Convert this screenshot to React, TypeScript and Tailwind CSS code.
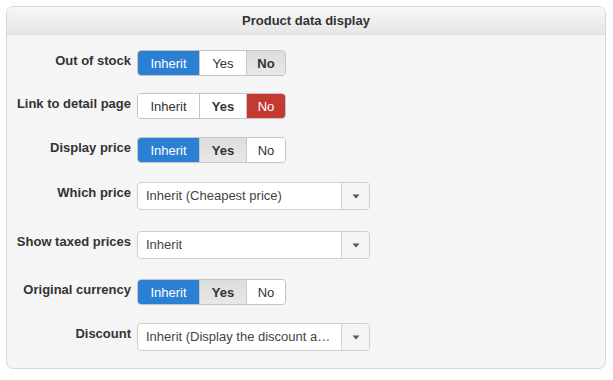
import React from "react";

type Seg = { label: string; style: "blue" | "gray" | "red" | "plain" | "bold" };

function Segmented({ items }: { items: Seg[] }) {
  return (
    <div className="flex h-[26px] rounded-[4px] border border-[#c4c4c4] overflow-hidden">
      {items.map((it, i) => {
        const base = "flex items-center justify-center h-full text-[13px] leading-none";
        const widths = ["w-[61px]", "w-[47px]", "w-[39px]"];
        let cls = "bg-white text-[#333]";
        if (it.style === "blue") cls = "bg-[#2b80d4] text-white";
        if (it.style === "red") cls = "bg-[#c23a31] text-white";
        if (it.style === "gray") cls = "bg-gradient-to-b from-[#dcdcdc] to-[#e8e8e8] text-[#333] font-bold";
        if (it.style === "bold") cls = "bg-white text-[#333] font-bold";
        const border = i > 0 ? "border-l border-[#c8c8c8]" : "";
        return (
          <div key={i} className={`${base} ${widths[i]} ${cls} ${border}`}>
            {it.label}
          </div>
        );
      })}
    </div>
  );
}

function Select({ value }: { value: string }) {
  return (
    <div className="flex h-[28px] w-[233px] rounded-[4px] border border-[#cfcfcf] bg-white overflow-hidden">
      <div className="flex-1 min-w-0 flex items-center pl-[8px] text-[13px] text-[#444]">
        <span className="truncate">{value}</span>
      </div>
      <div className="w-[28px] shrink-0 flex items-center justify-center border-l border-[#d6d6d6] bg-[#f4f4f4]">
        <svg width="8" height="5" viewBox="0 0 8 5">
          <path d="M0.5 0.5 H7.5 L4 4.5 Z" fill="#555" />
        </svg>
      </div>
    </div>
  );
}

function Row({ label, mt, children }: { label: string; mt: string; children: React.ReactNode }) {
  return (
    <div className={`flex ${mt}`}>
      <div className="w-[125px] shrink-0 text-right pr-[1px] pt-[3px] text-[13px] font-bold text-[#333] leading-[16px]">
        {label}
      </div>
      <div className="ml-[5px]">{children}</div>
    </div>
  );
}

export default function App() {
  return (
    <div className="w-[613px] h-[380px] bg-white pt-[6px] pl-[6px]" style={{ fontFamily: '"Liberation Sans", Arial, sans-serif' }}>
      <div className="w-[600px] h-[363px] rounded-[7px] border border-[#d8d8d8] bg-[#f5f5f5] overflow-hidden">
        <div className="h-[28px] flex items-center justify-center border-b border-[#e0e0e0] bg-gradient-to-b from-[#f7f7f7] to-[#e6e6e6] text-[13px] font-bold text-[#333]">
          Product data display
        </div>
        <div className="pt-[15px]">
          <Row label="Out of stock" mt="mt-0">
            <Segmented items={[{ label: "Inherit", style: "blue" }, { label: "Yes", style: "plain" }, { label: "No", style: "gray" }]} />
          </Row>
          <Row label="Link to detail page" mt="mt-[17px]">
            <Segmented items={[{ label: "Inherit", style: "plain" }, { label: "Yes", style: "bold" }, { label: "No", style: "red" }]} />
          </Row>
          <Row label="Display price" mt="mt-[18px]">
            <Segmented items={[{ label: "Inherit", style: "blue" }, { label: "Yes", style: "gray" }, { label: "No", style: "plain" }]} />
          </Row>
          <Row label="Which price" mt="mt-[19px]">
            <Select value="Inherit (Cheapest price)" />
          </Row>
          <Row label="Show taxed prices" mt="mt-[21px]">
            <Select value="Inherit" />
          </Row>
          <Row label="Original currency" mt="mt-[20px]">
            <Segmented items={[{ label: "Inherit", style: "blue" }, { label: "Yes", style: "gray" }, { label: "No", style: "plain" }]} />
          </Row>
          <Row label="Discount" mt="mt-[18px]">
            <Select value="Inherit (Display the discount amount)" />
          </Row>
        </div>
      </div>
    </div>
  );
}
